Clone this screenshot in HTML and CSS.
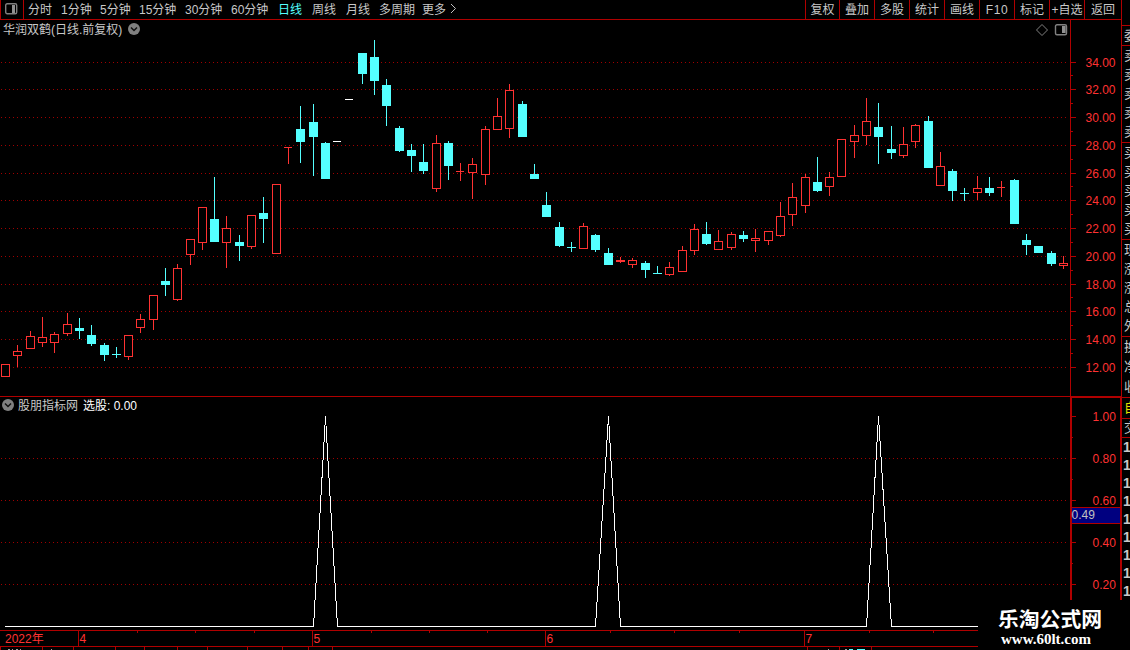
FILE: index.html
```html
<!DOCTYPE html>
<html lang="zh-CN">
<head>
<meta charset="utf-8">
<title>华润双鹤 日线</title>
<link rel="stylesheet" href="styles.css">
</head>
<body>
<div class="terminal">
  <div class="workspace">
    <header class="toolbar">
      <div class="layout-btn">
        <svg width="13" height="12" viewBox="0 0 13 12"><rect class="icon-frame" x="0.7" y="0.7" width="11" height="10" rx="1.5"/><rect class="icon-fill" x="7" y="2" width="3" height="8"/></svg>
      </div>
      <nav class="periods">
        <span>分时</span><span>1分钟</span><span>5分钟</span><span>15分钟</span><span>30分钟</span><span>60分钟</span><span class="active">日线</span><span>周线</span><span>月线</span><span>多周期</span><span>更多</span>
        <svg class="more" width="7" height="11" viewBox="0 0 7 11"><path d="M1 1L5.5 5.5L1 10"/></svg>
      </nav>
      <nav class="actions">
        <span>复权</span><span>叠加</span><span>多股</span><span>统计</span><span>画线</span><span class="latin">F10</span><span>标记</span><span>+自选</span><span>返回</span>
      </nav>
    </header>

    <section class="panel price">
      <svg class="plot" id="candles" width="1070" height="376" viewBox="0 20 1070 376"></svg>
      <div class="caption">
        <span>华润双鹤(日线.前复权)</span>
        <svg class="toggle" width="12" height="12" viewBox="0 0 12 12"><circle cx="6" cy="6" r="6"/><path d="M3 4.5L6 7.5L9 4.5"/></svg>
        <svg class="tools" width="32" height="12" viewBox="0 0 32 12"><path class="diamond" d="M6 0.5L11.5 6L6 11.5L0.5 6Z"/><rect class="icon-frame" x="19.5" y="0.7" width="11" height="10" rx="1.5"/><rect class="icon-fill" x="26" y="2" width="3.6" height="7"/></svg>
      </div>
      <svg class="axis" id="price-axis" width="51" height="376" viewBox="1070 20 51 376"></svg>
    </section>

    <section class="panel indicator">
      <svg class="plot" id="signal" width="1070" height="233" viewBox="0 397 1070 233"></svg>
      <div class="caption low">
        <svg class="toggle" width="12" height="12" viewBox="0 0 12 12"><circle cx="6" cy="6" r="6"/><path d="M3 4.5L6 7.5L9 4.5"/></svg>
        <span>股朋指标网</span><span class="value">选股: 0.00</span>
      </div>
      <svg class="axis" id="signal-axis" width="51" height="233" viewBox="1070 397 51 233"></svg>
    </section>

    <svg class="time" id="time-axis" width="1121" height="20" viewBox="0 630 1121 20"></svg>
  </div>

  <aside class="quotes">
    <div class="group blank"></div>
    <div class="group one"><span>委</span></div>
    <div class="group five"><span>卖</span><span>卖</span><span>卖</span><span>卖</span><span>卖</span></div>
    <div class="group five"><span>买</span><span>买</span><span>买</span><span>买</span><span>买</span></div>
    <div class="group five"><span>现</span><span>涨</span><span>涨</span><span>总</span><span>外</span></div>
    <div class="group three"><span>换</span><span>净</span><span>收</span></div>
    <div class="group own"><span>自</span></div>
    <div class="group deal"><span>交</span></div>
    <div class="group ticks"><span>1</span><span>1</span><span>1</span><span>1</span><span>1</span><span>1</span><span>1</span><span>1</span><span>1</span></div>
  </aside>

  <div class="brand"><strong>乐淘公式网</strong><em>www.60lt.com</em></div>
</div>
<script src="chart.js"></script>
</body>
</html>
```
FILE: styles.css
```css
* { box-sizing: border-box; }
body { margin: 0; background: #000; }
.terminal {
  position: relative;
  display: grid;
  grid-template-columns: 1121px 9px;
  width: 1130px;
  height: 650px;
  overflow: hidden;
  color: #c8c8c8;
  font: 12px/14px "Liberation Sans", "Noto Sans CJK SC", sans-serif;
}
.workspace { display: flex; flex-direction: column; }
.toolbar {
  display: flex;
  height: 20px;
  border-bottom: 1px solid #b00000;
  white-space: nowrap;
}
.layout-btn {
  width: 24px;
  padding: 3px 0 0 4px;
  border: solid #b00000;
  border-width: 0 1px;
}
svg { display: block; }
.icon-frame { fill: none; stroke: #808080; stroke-width: 1.4; }
.icon-fill { fill: #909090; }
.periods {
  display: grid;
  grid-template-columns: 33px 39px 39px 46px 46px 47px 34px 34px 33px 43px 28px 8px;
  padding: 3px 0 0 4px;
}
.active { color: #54ffff; }
.more path { fill: none; stroke: #c0c0c0; }
.actions {
  display: grid;
  grid-template-columns: 34px repeat(7, 35px) 37px;
  margin-left: auto;
}
.actions span { padding-top: 3px; border-left: 1px solid #b00000; text-align: center; }
.actions .latin { letter-spacing: 0.6px; }
.panel { display: grid; grid-template-columns: 1070px 51px; }
.price { height: 377px; border-bottom: 1px solid #b00000; }
.indicator { height: 233px; }
.plot, .caption { grid-column: 1; grid-row: 1; }
.axis { grid-column: 2; grid-row: 1; }
.caption { display: flex; align-items: flex-start; padding: 3px 2px 0 3px; height: 20px; }
.caption .toggle { margin: 0 0 0 6px; }
.toggle circle { fill: #808080; }
.toggle path { fill: none; stroke: #101010; stroke-width: 1.5; }
.tools { margin: 1px 0 0 auto; }
.diamond { fill: none; stroke: #808080; }
.low { padding: 2px 0 0 2px; }
.low .toggle { margin: 0 4px 0 0; }
.low .value { margin-left: 5px; color: #fff; }

.pixel { shape-rendering: crispEdges; }
.line { fill: #b00000; }
.dots { stroke: #a00000; stroke-dasharray: 1 3; }
.up { fill: #ff3232; }
.up-box { fill: #000; stroke: #ff3232; }
.down { fill: #54ffff; }
.flat { fill: #fff; }
.curve { fill: none; stroke: #fff; }
.scale { fill: #ff3232; font-size: 12px; }
.cursor { fill: #000080; }
.cursor-text { fill: #c0c0c0; font-size: 12px; }
.grey { fill: #a0a0a0; }

.quotes { display: flex; flex-direction: column; height: 600px; overflow: hidden; border-left: 1px solid #b00000; }
.group { display: flex; flex-direction: column; justify-content: space-around; border-top: 1px solid #b00000; padding-left: 2px; font-size: 13px; line-height: 18px; }
.group span { display: block; width: 14px; }
.blank { height: 25px; border-top: 0; }
.one { height: 20px; }
.five { height: 97px; }
.three { height: 61px; }
.own { height: 21px; color: #e0e000; }
.deal { height: 19px; }
.ticks { height: 163px; font-size: 14px; font-weight: bold; padding-left: 1px; }

.brand {
  position: absolute;
  right: 0;
  bottom: 0;
  display: flex;
  flex-direction: column;
  width: 152px;
  height: 50px;
  padding: 6px 0 0 20px;
  background: #000;
  color: #fff;
  white-space: nowrap;
}
.brand strong { font: bold 20.8px/24px "Noto Sans CJK SC", sans-serif; }
.brand em { padding: 1px 0 0 3px; font: bold 15px/17px "Liberation Serif", serif; }
```
FILE: chart.js
```js
const NS = "http://www.w3.org/2000/svg";

function add(parent, name, attrs, text) {
  const el = document.createElementNS(NS, name);
  for (const key in attrs) el.setAttribute(key, attrs[key]);
  if (text !== undefined) el.textContent = text;
  parent.appendChild(el);
}
function box(parent, cls, x, y, width, height) {
  add(parent, "rect", { class: cls + " pixel", x, y, width, height });
}

// centre, high, body top, body bottom, low, kind (u = up, d = down, f = flat)
const candles = `5 364 364 377 377 u;17 345 351 356 367 u;30 331 336 349 349 u;42 317 337 343 347 u;54 332 334 343 353 u
67 313 324 334 336 u;79 318 328 331 339 d;91 325 335 344 346 d;104 343 345 355 361 d;116 347 354 355 358 d
128 335 335 357 360 u;140 314 319 328 333 u;153 295 295 320 330 u;165 268 281 285 296 d;177 264 268 300 301 u
190 239 239 255 265 u;202 207 207 243 250 u;214 177 219 242 242 d;226 216 228 243 268 u;239 235 242 246 261 d
251 215 215 247 249 u;263 197 213 219 243 d;276 184 184 254 254 u;288 147 147 148 164 u;300 106 129 142 163 d
313 104 122 137 176 d;325 142 143 179 179 d;337 141 141 142 142 f;349 99 99 100 100 f;362 53 53 74 84 d
374 40 57 81 95 d;386 79 85 106 126 d;399 126 128 151 152 d;411 144 150 156 172 d;423 144 162 171 174 d
436 135 143 189 192 u;448 141 143 166 180 d;460 163 171 172 181 u;472 158 164 173 199 u;485 126 129 175 185 u
497 98 116 130 130 u;509 84 90 129 138 u;522 101 104 137 137 d;534 164 174 179 179 d;546 192 205 217 217 d
559 222 227 246 247 d;571 242 247 248 252 d;583 223 226 249 249 u;595 234 235 250 252 d;608 248 253 265 265 d
620 257 260 262 263 u;632 258 260 265 268 u;645 261 263 270 278 d;657 266 273 274 274 d;669 262 267 275 276 u
682 246 250 272 272 u;694 224 229 251 255 u;706 222 234 244 245 d;718 230 241 250 250 u;731 232 234 248 250 u
743 231 235 239 242 d;755 229 238 241 252 u;768 231 231 241 245 u;780 202 216 236 237 u;792 183 197 215 226 u
805 174 177 206 213 u;817 157 182 191 192 d;829 172 177 187 196 u;841 139 139 177 177 u;854 125 135 142 158 u
866 98 121 136 145 u;878 103 127 137 164 d;891 126 149 153 159 d;903 127 144 156 158 u;915 124 125 142 148 u
928 116 121 168 168 d;940 152 166 186 186 u;952 169 171 191 201 d;964 188 193 194 201 d;977 176 188 193 200 u
989 177 188 193 196 d;1001 181 187 188 197 u;1014 179 180 224 224 d;1026 234 240 245 255 d;1038 246 246 253 253 d
1051 251 253 264 266 d;1063 256 263 266 269 u`.split(/[;\n]/).map(row => row.split(" "));

const plot = document.getElementById("candles");
const priceAxis = document.getElementById("price-axis");
const priceRows = [62, 89, 117, 145, 173, 200, 228, 256, 284, 311, 339, 367];

box(priceAxis, "line", 1070, 20, 1, 376);
priceRows.forEach((y, i) => {
  add(plot, "line", { class: "dots pixel", x1: 1, x2: 1066, y1: y + 0.5, y2: y + 0.5 });
  box(priceAxis, "line", 1071, y, 5, 1);
  if (i < 11) box(priceAxis, "line", 1071, Math.floor((y + priceRows[i + 1]) / 2), 2, 1);
  add(priceAxis, "text", { class: "scale", x: 1085.5, y: y + 5 }, (34 - 2 * i).toFixed(2));
});

const kinds = { u: "up", d: "down", f: "flat" };
for (const row of candles) {
  const [x, high, top, bottom, low] = row.slice(0, 5).map(Number);
  const cls = kinds[row[5]];
  const thin = bottom - top === 1;
  box(plot, cls, x, high, 1, low - high);
  if (cls === "up" && bottom - top > 2)
    add(plot, "rect", { class: "up-box pixel", x: x - 3.5, y: top + 0.5, width: 8, height: bottom - top - 1 });
  else
    box(plot, cls, x - 4, top, thin && cls !== "down" ? 8 : 9, bottom - top);
}

const signal = document.getElementById("signal");
const signalAxis = document.getElementById("signal-axis");
box(signalAxis, "line", 1070, 397, 2, 203);
box(signalAxis, "line", 1070, 397, 51, 1);
box(signalAxis, "line", 1120, 397, 1, 203);
[416, 458, 500, 542, 584].forEach((y, i) => {
  if (i) add(signal, "line", { class: "dots pixel", x1: 1, x2: 1066, y1: y + 0.5, y2: y + 0.5 });
  box(signalAxis, "line", 1072, y, 4, 1);
  if (i < 4) box(signalAxis, "line", 1072, y + 21, 1, 1);
  add(signalAxis, "text", { class: "scale", x: 1092.5, y: y + 5 }, (1 - 0.2 * i).toFixed(2));
});
box(signalAxis, "line", 1072, 507, 48, 17);
box(signalAxis, "cursor", 1072, 508, 48, 15);
add(signalAxis, "text", { class: "cursor-text", x: 1071.5, y: 519 }, "0.49");
add(signal, "polyline", {
  class: "curve pixel",
  points: "5,626.5 313.5,626.5 325.5,416.5 337.5,626.5 595.5,626.5 608.5,416.5 620.5,626.5 866.5,626.5 878.5,416.5 891.5,626.5 978,626.5"
});

const time = document.getElementById("time-axis");
box(time, "line", 0, 630, 978, 1);
box(time, "line", 0, 646, 978, 1);
[78, 312, 545, 804].forEach(x => box(time, "line", x, 631, 1, 15));
[137, 195, 254, 371, 429, 487, 610, 674, 739, 869, 933].forEach(x => box(time, "line", x, 631, 1, 2));
[0, 42, 73, 115, 144, 177, 207, 247, 282, 308, 332, 807, 839, 871].forEach(x => box(time, "line", x, 647, 1, 3));
[[5, "2022年"], [79.5, "4"], [313.5, "5"], [546.5, "6"], [805.5, "7"]].forEach(([x, label]) =>
  add(time, "text", { class: "scale", x, y: 643 }, label));
[[8, 2], [12, 1], [16, 2], [20, 1], [51, 1], [828, 1], [845, 2]].forEach(([x, w]) => box(time, "grey", x, 649, w, 1));
[[849, 4], [857, 8]].forEach(([x, w]) => box(time, "down", x, 649, w, 1));
```
